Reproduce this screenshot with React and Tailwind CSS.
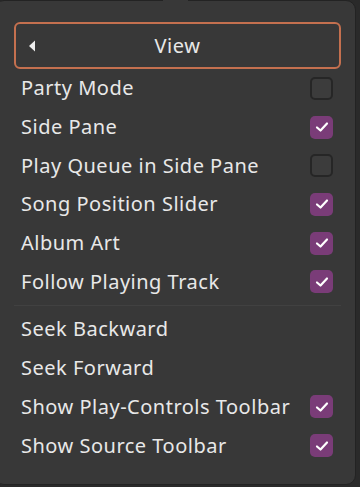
import React from "react";

const items = [
  { label: "Party Mode", check: false },
  { label: "Side Pane", check: true },
  { label: "Play Queue in Side Pane", check: false },
  { label: "Song Position Slider", check: true },
  { label: "Album Art", check: true },
  { label: "Follow Playing Track", check: true },
];
const items2 = [
  { label: "Seek Backward" },
  { label: "Seek Forward" },
  { label: "Show Play-Controls Toolbar", check: true },
  { label: "Show Source Toolbar", check: true },
];

function Box({ check }) {
  if (check === undefined) return null;
  return check ? (
    <div className="w-[23px] h-[23px] rounded-[5px] bg-[#7a3c78] flex items-center justify-center">
      <svg width="14" height="12" viewBox="0 0 14 12">
        <path d="M2 6.5 L5.5 9.5 L12 2.5" fill="none" stroke="#ffffff" strokeWidth="2.2" strokeLinecap="round" strokeLinejoin="round" />
      </svg>
    </div>
  ) : (
    <div className="w-[23px] h-[23px] rounded-[5px] bg-[#3c3c3c] border-2 border-[#262626]" />
  );
}

function Row({ label, check }) {
  return (
    <div className="h-[38.7px] flex items-center justify-between pl-[26px] pr-[22px]">
      <span className="text-[20px] tracking-[0.5px] text-[#e8e8e8] leading-none">{label}</span>
      <Box check={check} />
    </div>
  );
}

export default function App() {
  return (
    <div
      className="relative w-[360px] h-[487px] bg-[#2a2a2a] overflow-hidden"
      style={{ fontFamily: '"Noto Sans", "Open Sans", sans-serif' }}
    >
      <div className="relative -ml-[6px] w-[362px] h-[485px] bg-[#383838] border border-[#232323] rounded-[10px] pt-[21px]">
        <div className="absolute -top-px left-[168px] w-[25px] h-[3px] bg-[#383838]" />
        <div className="ml-[19px] mr-[14px] h-[47px] rounded-[6px] border-2 border-[#c4704f] flex items-center relative">
          <svg className="absolute left-[12px]" width="8" height="12" viewBox="0 0 8 12">
            <path d="M7 0.5 L1 6 L7 11.5 Z" fill="#eeeeee" />
          </svg>
          <span className="flex-1 text-center text-[20px] tracking-[0.5px] text-[#e8e8e8] leading-none">View</span>
        </div>
        <div>
          {items.map((it) => (
            <Row key={it.label} {...it} />
          ))}
        </div>
        <div className="ml-[19px] mr-[14px] my-[4px] h-px bg-[#414141]" />
        <div>
          {items2.map((it) => (
            <Row key={it.label} {...it} />
          ))}
        </div>
      </div>
    </div>
  );
}
